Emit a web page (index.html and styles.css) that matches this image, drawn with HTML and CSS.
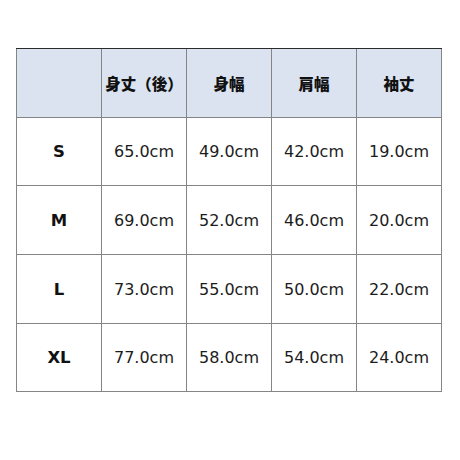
FILE: index.html
```html
<!DOCTYPE html>
<html lang="ja">
<head>
<meta charset="utf-8">
<link rel="stylesheet" href="styles.css">
</head>
<body>
<div class="sheet">
  <div class="size-table">
    <div class="cell head"></div>
    <div class="cell head">身丈（後）</div>
    <div class="cell head">身幅</div>
    <div class="cell head">肩幅</div>
    <div class="cell head">袖丈</div>

    <div class="cell label">S</div>
    <div class="cell">65.0cm</div>
    <div class="cell">49.0cm</div>
    <div class="cell">42.0cm</div>
    <div class="cell">19.0cm</div>

    <div class="cell label">M</div>
    <div class="cell">69.0cm</div>
    <div class="cell">52.0cm</div>
    <div class="cell">46.0cm</div>
    <div class="cell">20.0cm</div>

    <div class="cell label">L</div>
    <div class="cell">73.0cm</div>
    <div class="cell">55.0cm</div>
    <div class="cell">50.0cm</div>
    <div class="cell">22.0cm</div>

    <div class="cell label">XL</div>
    <div class="cell">77.0cm</div>
    <div class="cell">58.0cm</div>
    <div class="cell">54.0cm</div>
    <div class="cell">24.0cm</div>
  </div>
</div>
</body>
</html>
```

FILE: styles.css
```css
html, body {
  margin: 0;
  padding: 0;
  background: #ffffff;
}
.sheet {
  width: 460px;
  height: 460px;
  padding: 48px 0 0 16px;
  box-sizing: border-box;
}
.size-table {
  display: grid;
  grid-template-columns: repeat(5, 84px);
  grid-template-rows: 68px 67px 68px 68px 67px;
  gap: 1px;
  width: max-content;
  background: #858585;
  padding: 0 1px 1px 1px;
  border-top: 1px solid #2b2b2b;
}
.cell {
  background: #ffffff;
  display: flex;
  align-items: center;
  justify-content: center;
  font-family: "DejaVu Sans", "Noto Sans CJK JP", sans-serif;
  font-size: 16px;
  color: #1c1c1c;
}
.head {
  background: #dbe3f1;
  font-family: "Noto Sans CJK JP", "DejaVu Sans", sans-serif;
  font-weight: 900;
  font-size: 15.5px;
  color: #111111;
}
.label {
  font-weight: 700;
  font-size: 16.5px;
  color: #111111;
}
```
